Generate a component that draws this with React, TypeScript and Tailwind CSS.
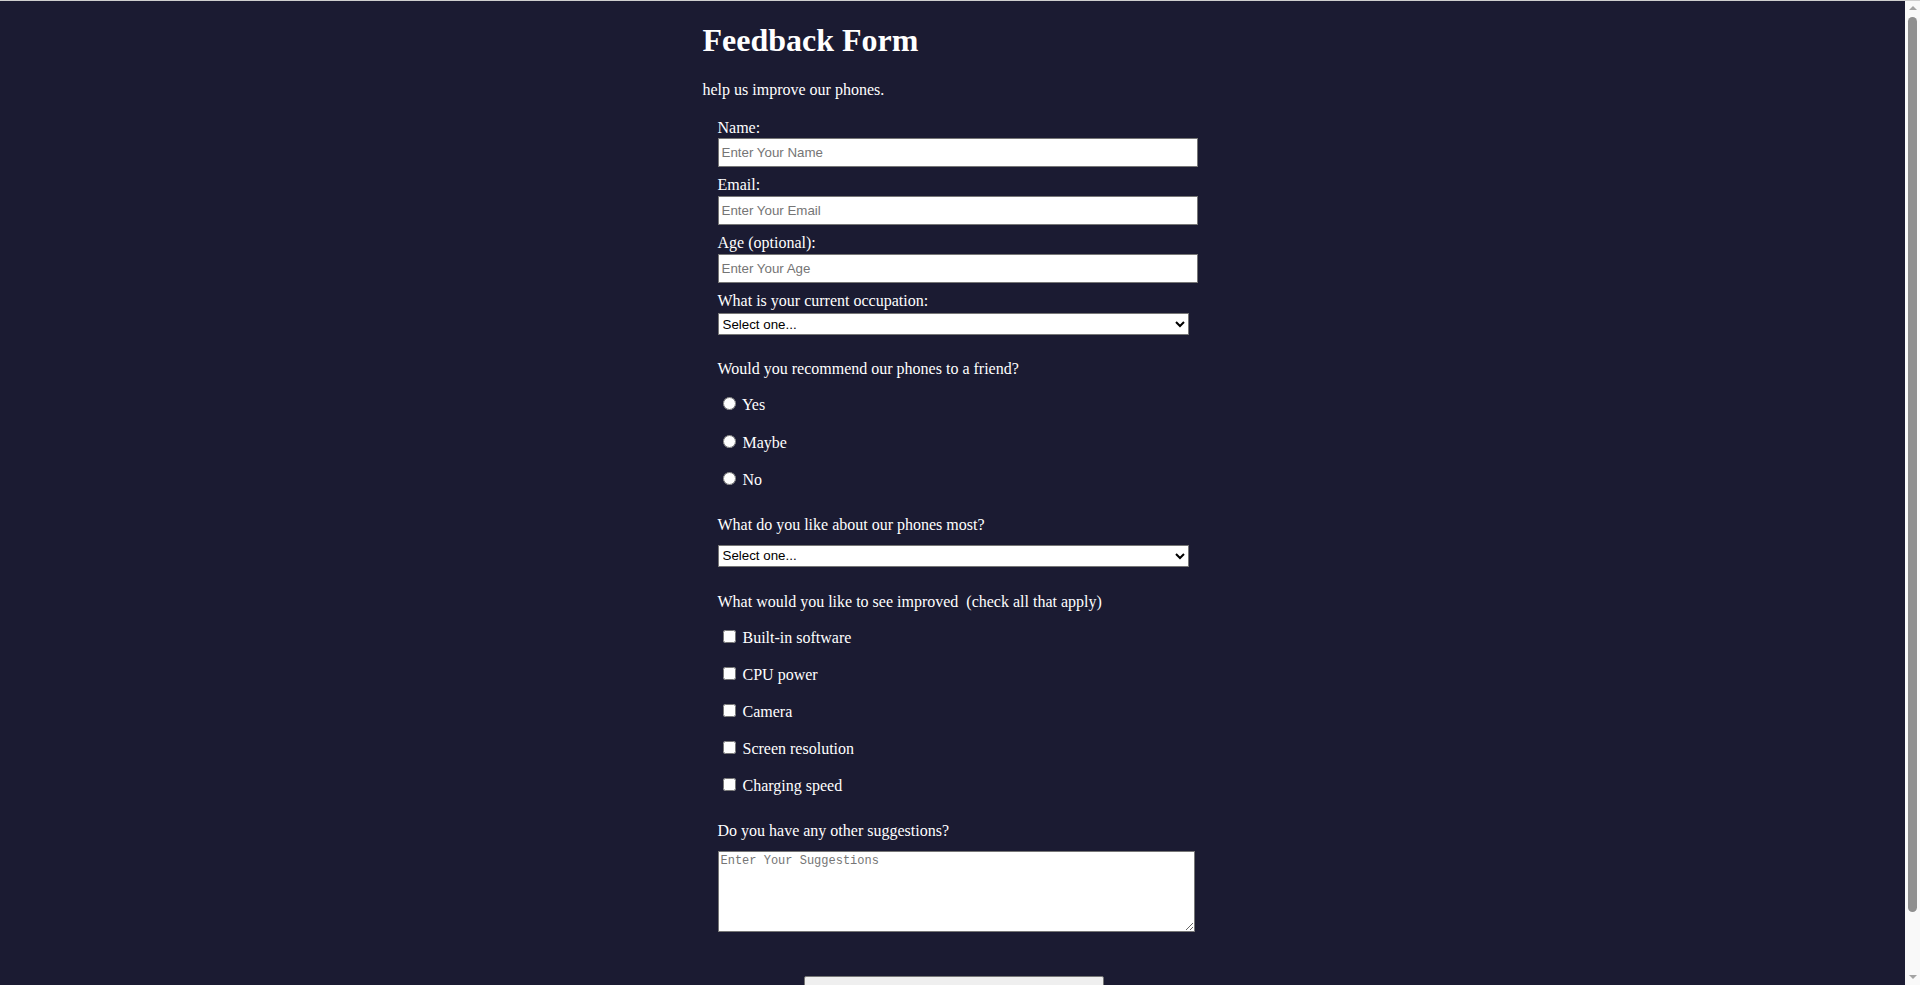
const occupations = ['Select one...', 'Student', 'Full-time job', 'Part-time job', 'Unemployed', 'Prefer not to say']
const favourites = ['Select one...', 'Camera', 'Battery life', 'Design', 'Performance', 'Price']
const improvements = ['Built-in software', 'CPU power', 'Camera', 'Screen resolution', 'Charging speed']

export default function App() {
  return (
    <div className="min-h-screen bg-[#1b1b32] border-t border-[#cfcfcf] text-white font-['Liberation_Serif',serif] text-base leading-[18.4px] pr-[15px]">
      {/* browser scrollbar seen in the screenshot */}
      <div aria-hidden className="fixed top-[1px] right-0 bottom-0 w-[15px] bg-[#f9f9f9] flex flex-col items-center">
        <div className="mt-[5px] w-0 h-0 border-l-[4px] border-r-[4px] border-b-[4px] border-l-transparent border-r-transparent border-b-[#a3a3a3]" />
        <div className="mt-[7px] w-[9px] h-[895px] rounded-full bg-[#8f8f8f]" />
        <div className="mt-auto mb-[6px] w-0 h-0 border-l-[4px] border-r-[4px] border-t-[4px] border-l-transparent border-r-transparent border-t-[#a3a3a3]" />
      </div>

      <div className="w-[500px] mx-auto">
        {/* Header */}
        <h1 className="text-[32px] font-bold leading-[36.8px] mt-[21px]">Feedback Form</h1>
        <p className="mt-[22px]">help us improve our phones.</p>

        <form className="ml-[15px] mt-[20px] pb-[40px]" onSubmit={(e) => e.preventDefault()}>
          <label htmlFor="name" className="block">Name:</label>
          <input
            id="name"
            type="text"
            placeholder="Enter Your Name"
            className="block mt-[0.5px] mb-[9px] w-[480px] h-[29px] pl-[3px] bg-white text-black border border-[#767676] font-['Liberation_Sans',sans-serif] text-[13.33px] placeholder:text-[#757575]"
          />

          <label htmlFor="email" className="block">Email:</label>
          <input
            id="email"
            type="email"
            placeholder="Enter Your Email"
            className="block mt-[1.5px] mb-[9px] w-[480px] h-[29px] pl-[3px] bg-white text-black border border-[#767676] font-['Liberation_Sans',sans-serif] text-[13.33px] placeholder:text-[#757575]"
          />

          <label htmlFor="age" className="block">Age (optional):</label>
          <input
            id="age"
            type="number"
            placeholder="Enter Your Age"
            className="block mt-[1.5px] mb-[9px] w-[480px] h-[29px] pl-[3px] bg-white text-black border border-[#767676] font-['Liberation_Sans',sans-serif] text-[13.33px] placeholder:text-[#757575]"
          />

          <label htmlFor="occupation" className="block">What is your current occupation:</label>
          <select
            id="occupation"
            className="block mt-[3px] w-[471px] h-[22px] bg-white text-black border border-[#767676] font-['Liberation_Sans',sans-serif] text-[13.33px]"
          >
            {occupations.map((o) => (
              <option key={o}>{o}</option>
            ))}
          </select>

          {/* Recommend */}
          <p className="mt-[25px]">Would you recommend our phones to a friend?</p>
          <div className="mt-[17.5px] flex flex-col gap-[19px]">
            {['Yes', 'Maybe', 'No'].map((v) => (
              <label key={v} className="block">
                <input type="radio" name="recommend" value={v} className="ml-[5px] mr-[3px]" /> {v}
              </label>
            ))}
          </div>

          <p className="mt-[26.5px]">What do you like about our phones most?</p>
          <select className="block mt-[10.5px] w-[471px] h-[22px] bg-white text-black border border-[#767676] font-['Liberation_Sans',sans-serif] text-[13.33px]">
            {favourites.map((o) => (
              <option key={o}>{o}</option>
            ))}
          </select>

          {/* Improvements */}
          <p className="mt-[26px] whitespace-pre">What would you like to see improved  (check all that apply)</p>
          <div className="mt-[17.5px] flex flex-col gap-[18.6px]">
            {improvements.map((v) => (
              <label key={v} className="block">
                <input type="checkbox" value={v} className="ml-[5px] mr-[3px]" /> {v}
              </label>
            ))}
          </div>

          <p className="mt-[27px]">Do you have any other suggestions?</p>
          <textarea
            placeholder="Enter Your Suggestions"
            className="block mt-[10px] w-[477px] h-[81px] p-[2px] bg-white text-black border border-[#767676] font-['Liberation_Mono',monospace] text-[12px] leading-[15px] placeholder:text-[#757575]"
          />

          <button
            type="submit"
            className="block ml-[86px] mt-[44px] w-[300px] h-[34px] bg-[#efefef] text-black border border-[#767676] rounded-[2px] font-['Liberation_Sans',sans-serif] text-[13.33px]"
          >
            Submit
          </button>
        </form>
      </div>
    </div>
  )
}
